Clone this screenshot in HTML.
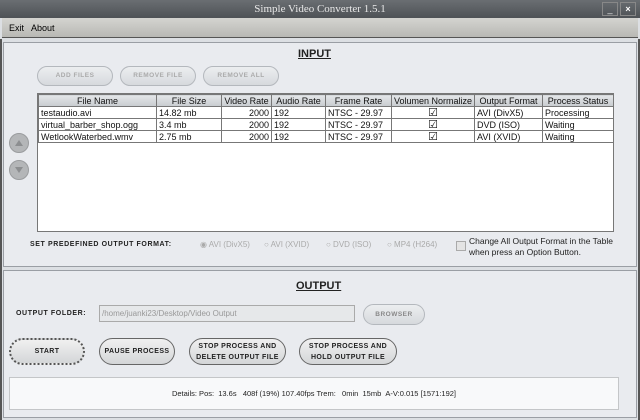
<!DOCTYPE html>
<html><head><style>
*{margin:0;padding:0;box-sizing:border-box}
body{width:640px;height:420px;overflow:hidden;background:#dcdfe3;font-family:"Liberation Sans",sans-serif;position:relative}
.a{position:absolute}
.title{left:0;top:0;width:640px;height:18px;background:linear-gradient(#6a6e72,#4e5256);color:#e8e8e8;font-family:"Liberation Serif",serif;font-size:11px;text-align:center;line-height:18px}
.menu{left:2px;top:18px;width:636px;height:20px;background:linear-gradient(#d4d4d0,#b8b8b4);border-bottom:1px solid #555;font-size:9px;line-height:20px;padding-left:7px}
.panel{background:#e9ebef;border:1px solid #9a9ea4}
.btn{border:1px solid #b4b8bd;border-radius:12px;background:linear-gradient(#eceef0,#d6d9dd);font-size:6.5px;font-weight:bold;color:#aaa;letter-spacing:.5px;text-align:center}
.btn2{border:1px solid #666;border-radius:14px;background:linear-gradient(#f0f0f0,#d4d6d8);font-size:7px;font-weight:bold;color:#222;text-align:center;letter-spacing:.4px;line-height:11px;display:flex;align-items:center;justify-content:center}
table{border-collapse:collapse;font-size:9px;color:#111}
td,th{border:1px solid #777;height:12px;padding:0 2px;white-space:nowrap;overflow:hidden}
th{font-weight:normal;background:linear-gradient(#e4e6e8,#c8ccd0);text-align:center}
td.r{text-align:right}
td.c{text-align:center;font-size:11px;line-height:10px}
.h{font-weight:bold;font-size:11px;text-decoration:underline;color:#222}
.rad{font-size:8px;color:#aaa}
</style></head><body>
<div class="a title">Simple Video Converter 1.5.1</div>
<div class="a" style="left:602px;top:2px;width:16px;height:14px;border:1px solid #888;color:#eee;font-size:9px;text-align:center;line-height:12px">_</div>
<div class="a" style="left:620px;top:2px;width:16px;height:14px;border:1px solid #888;color:#fff;font-size:9px;font-weight:bold;text-align:center;line-height:12px">×</div>
<div class="a menu">Exit &nbsp; About</div>
<div class="a" style="left:0;top:39px;width:2px;height:381px;background:#555"></div>
<div class="a" style="left:638px;top:39px;width:2px;height:381px;background:#555"></div>
<div class="a panel" style="left:3px;top:42px;width:634px;height:225px"></div>
<div class="a h" style="left:298px;top:48px">INPUT</div>
<div class="a btn" style="left:37px;top:66px;width:76px;height:20px;line-height:18px">ADD FILES</div>
<div class="a btn" style="left:120px;top:66px;width:76px;height:20px;line-height:18px">REMOVE FILE</div>
<div class="a btn" style="left:203px;top:66px;width:76px;height:20px;line-height:18px">REMOVE ALL</div>
<div class="a" style="left:9px;top:133px;width:20px;height:20px;border-radius:50%;background:#b4b6b8;border:1px solid #9a9c9e"><svg width="18" height="18"><path d="M5 12 L9 6 L13 12Z" fill="#8c8e90"/></svg></div>
<div class="a" style="left:9px;top:160px;width:20px;height:20px;border-radius:50%;background:#b4b6b8;border:1px solid #9a9c9e"><svg width="18" height="18"><path d="M5 6 L9 12 L13 6Z" fill="#8c8e90"/></svg></div>
<div class="a" style="left:37px;top:93px;width:577px;height:139px;background:#fff;border:1px solid #777">
<table style="width:576px;table-layout:fixed">
<colgroup><col style="width:118px"><col style="width:65px"><col style="width:50px"><col style="width:54px"><col style="width:66px"><col style="width:83px"><col style="width:68px"><col></colgroup>
<tr><th>File Name</th><th>File Size</th><th>Video Rate</th><th>Audio Rate</th><th>Frame Rate</th><th>Volumen Normalize</th><th>Output Format</th><th>Process Status</th></tr>
<tr><td>testaudio.avi</td><td>14.82 mb</td><td class="r">2000</td><td>192</td><td>NTSC - 29.97</td><td class="c">☑</td><td>AVI (DivX5)</td><td>Processing</td></tr>
<tr><td>virtual_barber_shop.ogg</td><td>3.4 mb</td><td class="r">2000</td><td>192</td><td>NTSC - 29.97</td><td class="c">☑</td><td>DVD (ISO)</td><td>Waiting</td></tr>
<tr><td>WetlookWaterbed.wmv</td><td>2.75 mb</td><td class="r">2000</td><td>192</td><td>NTSC - 29.97</td><td class="c">☑</td><td>AVI (XVID)</td><td>Waiting</td></tr>
</table></div>
<div class="a" style="left:30px;top:241px;font-size:7px;font-weight:bold;letter-spacing:.6px;color:#222">SET PREDEFINED OUTPUT FORMAT:</div>
<div class="a rad" style="left:200px;top:240px">◉ AVI (DivX5)</div>
<div class="a rad" style="left:264px;top:240px">○ AVI (XVID)</div>
<div class="a rad" style="left:326px;top:240px">○ DVD (ISO)</div>
<div class="a rad" style="left:387px;top:240px">○ MP4 (H264)</div>
<div class="a" style="left:456px;top:241px;width:10px;height:10px;border:1px solid #aaa;background:#e4e4e4"></div>
<div class="a" style="left:469px;top:236px;font-size:8.5px;color:#222;line-height:11px">Change All Output Format in the Table<br>when press an Option Button.</div>
<div class="a panel" style="left:3px;top:270px;width:634px;height:148px"></div>
<div class="a h" style="left:296px;top:280px">OUTPUT</div>
<div class="a" style="left:16px;top:310px;font-size:7px;font-weight:bold;letter-spacing:.6px;color:#222">OUTPUT FOLDER:</div>
<div class="a" style="left:99px;top:305px;width:256px;height:17px;border:1px solid #aaa;background:#e6e8ea;font-size:8px;color:#999;line-height:15px;padding-left:2px">/home/juanki23/Desktop/Video Output</div>
<div class="a btn" style="left:363px;top:304px;width:62px;height:21px;line-height:19px;color:#888">BROWSER</div>
<div class="a btn2" style="left:9px;top:338px;width:76px;height:27px;border:2px dotted #555">START</div>
<div class="a btn2" style="left:99px;top:338px;width:76px;height:27px">PAUSE PROCESS</div>
<div class="a btn2" style="left:189px;top:338px;width:97px;height:27px">STOP PROCESS AND<br>DELETE OUTPUT FILE</div>
<div class="a btn2" style="left:299px;top:338px;width:98px;height:27px">STOP PROCESS AND<br>HOLD OUTPUT FILE</div>
<div class="a" style="left:9px;top:377px;width:610px;height:33px;background:#f8f9fa;border:1px solid #c4c6c8;font-size:7.5px;color:#222;text-align:center;line-height:31px">Details: Pos: &nbsp;13.6s &nbsp; 408f (19%) 107.40fps Trem: &nbsp; 0min &nbsp;15mb &nbsp;A-V:0.015 [1571:192]</div>
</body></html>
